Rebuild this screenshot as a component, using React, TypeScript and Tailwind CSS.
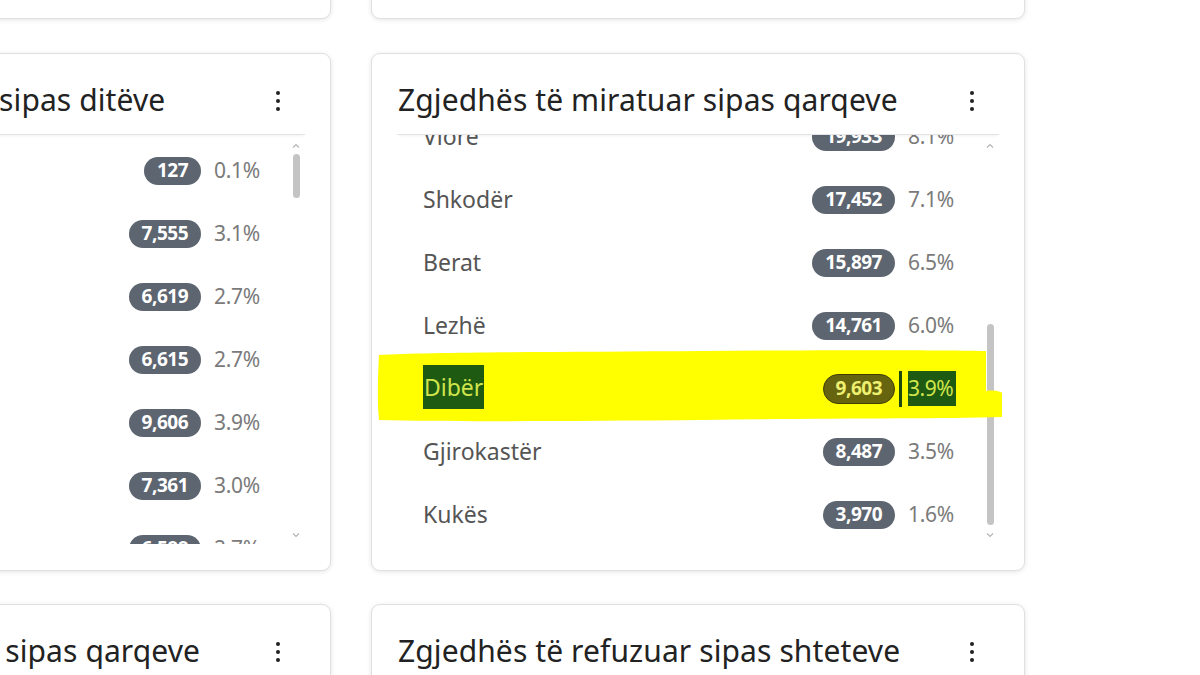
import React from "react";

type Row = { label: string; value: string; pct: string; hl?: boolean };

const leftRows: Row[] = [
  { label: "01/04/2025", value: "127", pct: "0.1%" },
  { label: "02/04/2025", value: "7,555", pct: "3.1%" },
  { label: "03/04/2025", value: "6,619", pct: "2.7%" },
  { label: "04/04/2025", value: "6,615", pct: "2.7%" },
  { label: "05/04/2025", value: "9,606", pct: "3.9%" },
  { label: "06/04/2025", value: "7,361", pct: "3.0%" },
  { label: "07/04/2025", value: "6,588", pct: "2.7%" },
  { label: "08/04/2025", value: "6,402", pct: "2.6%" },
];

const rightRows: Row[] = [
  { label: "Tiranë", value: "62,310", pct: "25.4%" },
  { label: "Durrës", value: "27,904", pct: "11.4%" },
  { label: "Elbasan", value: "24,115", pct: "9.8%" },
  { label: "Fier", value: "23,688", pct: "9.6%" },
  { label: "Korçë", value: "20,004", pct: "8.2%" },
  { label: "Vlorë", value: "19,933", pct: "8.1%" },
  { label: "Shkodër", value: "17,452", pct: "7.1%" },
  { label: "Berat", value: "15,897", pct: "6.5%" },
  { label: "Lezhë", value: "14,761", pct: "6.0%" },
  { label: "Dibër", value: "9,603", pct: "3.9%", hl: true },
  { label: "Gjirokastër", value: "8,487", pct: "3.5%" },
  { label: "Kukës", value: "3,970", pct: "1.6%" },
];

const font = { fontFamily: '"Noto Sans", "Open Sans", Arial, sans-serif' };

function Kebab() {
  return (
    <svg width="6" height="22" viewBox="0 0 6 22" className="shrink-0">
      <circle cx="3" cy="3" r="2" fill="#222" />
      <circle cx="3" cy="11" r="2" fill="#222" />
      <circle cx="3" cy="19" r="2" fill="#222" />
    </svg>
  );
}

function Header({ title }: { title: string }) {
  return (
    <div className="relative z-20 mx-[25px] flex h-[81px] items-start justify-between border-b border-[#e4e4e4] bg-white pt-[26px] pl-[1px] shadow-[0_3px_3px_-2px_rgba(0,0,0,0.06)]">
      <div className="whitespace-nowrap text-[30px] leading-[40px] tracking-[0.1px] text-[#222]">{title}</div>
      <div className="mr-[24px] mt-[10px]">
        <Kebab />
      </div>
    </div>
  );
}

function Caret({ up }: { up?: boolean }) {
  return (
    <svg width="8" height="5" viewBox="0 0 8 5" className={up ? "" : "rotate-180"}>
      <path d="M1 4.5 L4 1.5 L7 4.5" fill="none" stroke="#b4b4b4" strokeWidth="1.2" />
    </svg>
  );
}

function Scrollbar({ thumbTop, thumbH }: { thumbTop: number; thumbH: number }) {
  return (
    <div className="relative z-0 flex w-[14px] shrink-0 flex-col items-start">
      <div className="ml-[1px] mt-[8px]">
        <Caret up />
      </div>
      <div className="relative ml-[2px] flex-1 w-[7px]">
        <div
          className="absolute left-0 w-[7px] rounded-full bg-[#c4c4c4]"
          style={{ top: thumbTop, height: thumbH }}
        />
      </div>
      <div className="ml-[1px] mb-[6px]">
        <Caret />
      </div>
    </div>
  );
}

function ListRow({ r }: { r: Row }) {
  if (r.hl) {
    return (
      <div className="relative z-10 flex h-[63px] shrink-0 items-center">
        <div className="flex-1">
          <span className="bg-[#1f5a12] px-[1px] py-[6px] text-[23px] leading-[23px] text-[#d0e64c]">
            {r.label}
          </span>
        </div>
        <span className="flex h-[30px] items-center rounded-full border border-[#3f3f08] bg-[#66640f] px-[12px] text-[19px] font-bold leading-none tracking-[-0.5px] text-[#eef070]">
          {r.value}
        </span>
        <span className="ml-[4px] h-[36px] w-[3px] bg-[#1a4a0e]" />
        <span className="ml-[6px] flex h-[35px] w-[48px] items-center bg-[#1f5a12] text-[21px] leading-none tracking-[-0.5px] text-[#d0e64c]">
          {r.pct}
        </span>
      </div>
    );
  }
  return (
    <div className="relative z-10 flex h-[63px] shrink-0 items-center">
      <div className="flex-1 whitespace-nowrap text-[23px] text-[#555]">{r.label}</div>
      <span className="flex h-[28px] items-center rounded-full bg-[#5d6570] px-[13px] text-[19px] font-bold leading-none tracking-[-0.5px] text-white">
        {r.value}
      </span>
      <span className="ml-[13px] w-[48px] whitespace-nowrap text-[21px] leading-none tracking-[-0.3px] text-[#7a7a7a]">
        {r.pct}
      </span>
    </div>
  );
}

function ListCard({
  title,
  rows,
  bottom,
  thumbTop,
  thumbH,
  highlight,
}: {
  title: string;
  rows: Row[];
  bottom?: boolean;
  thumbTop: number;
  thumbH: number;
  highlight?: boolean;
}) {
  return (
    <div className="relative isolate h-[518px] w-[654px] shrink-0 rounded-[9px] border border-[#e0e0e0] bg-white shadow-[0_1px_5px_rgba(0,0,0,0.10)]">
      {highlight && (
        <svg
          className="absolute left-0 top-0 z-[5]"
          width="654"
          height="518"
          viewBox="0 0 654 518"
        >
          <path
            d="M7 301 C 60 298, 200 298, 330 297 C 450 296, 560 296, 614 297 L 614 337 C 620 336, 628 337, 630 339 L 630 363 C 560 365, 450 364, 330 366 C 200 367, 80 368, 7 366 C 5 345, 6 320, 7 301 Z"
            fill="#ffff00"
          />
        </svg>
      )}
      <Header title={title} />
      <div className="mx-[25px] flex h-[409px]">
        <div
          className={
            "flex min-w-0 flex-1 flex-col overflow-hidden pl-[26px] pr-[29px] " +
            (bottom ? "justify-end" : "pt-[4px]")
          }
        >
          <div className={"flex shrink-0 flex-col " + (bottom ? "-mb-[2px]" : "")}>
            {rows.map((r, i) => (
              <ListRow key={i} r={r} />
            ))}
          </div>
        </div>
        <Scrollbar thumbTop={thumbTop} thumbH={thumbH} />
      </div>
    </div>
  );
}

function StubCard({ title, tall }: { title?: string; tall?: boolean }) {
  return (
    <div
      className={
        "relative w-[654px] shrink-0 rounded-[9px] border border-[#e0e0e0] bg-white shadow-[0_1px_5px_rgba(0,0,0,0.10)] " +
        (tall ? "h-[200px]" : "h-[100px]")
      }
    >
      {title && <Header title={title} />}
    </div>
  );
}

export default function App() {
  return (
    <div className="h-[675px] w-[1200px] overflow-hidden bg-white" style={font}>
      <div className="ml-[-323px] flex flex-col gap-[34px]">
        <div className="mt-[-81px] flex gap-[40px]">
          <StubCard />
          <StubCard />
        </div>
        <div className="flex gap-[40px]">
          <ListCard
            title="Zgjedhës të pranuar sipas ditëve"
            rows={leftRows}
            thumbTop={6}
            thumbH={44}
          />
          <ListCard
            title="Zgjedhës të miratuar sipas qarqeve"
            rows={rightRows}
            bottom
            thumbTop={176}
            thumbH={201}
            highlight
          />
        </div>
        <div className="-mt-[1px] flex gap-[40px]">
          <StubCard title="Zgjedhës të refuzuar sipas qarqeve" tall />
          <StubCard title="Zgjedhës të refuzuar sipas shteteve" tall />
        </div>
      </div>
    </div>
  );
}
